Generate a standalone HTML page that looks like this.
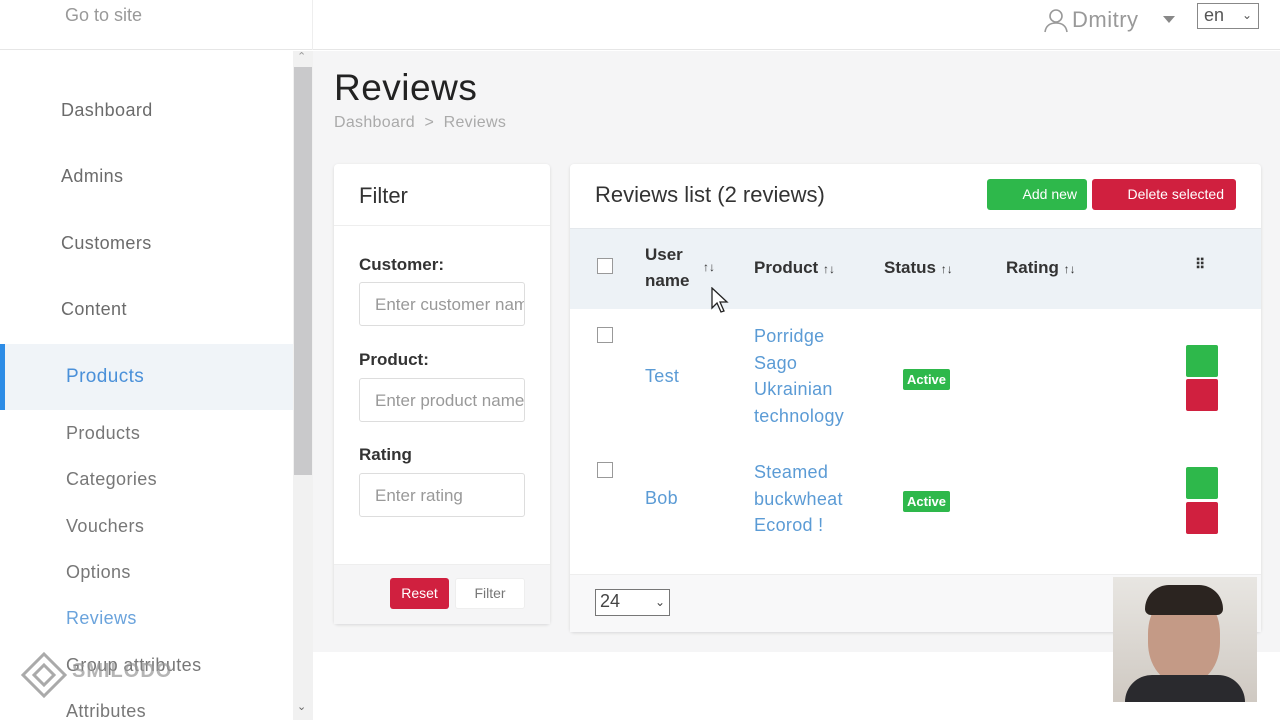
<!DOCTYPE html>
<html><head><style>
*{box-sizing:border-box;margin:0;padding:0}
body{width:1280px;height:720px;overflow:hidden;background:#fff;font-family:"Liberation Sans",sans-serif;position:relative;color:#333}
.a{position:absolute}
.side a,.sub{position:absolute;color:#6b6b6b;font-size:18px;letter-spacing:.4px}
.sub{color:#777}
.blue{color:#4a90d9}
.card{position:absolute;background:#fff;border-radius:4px;box-shadow:0 1px 3px rgba(0,0,0,.12)}
.inp{position:absolute;left:25px;width:166px;height:44px;border:1px solid #ddd;border-radius:3px;color:#999;font-size:17px;padding:12px 15px;white-space:nowrap;overflow:hidden}
.lbl{position:absolute;left:25px;font-weight:bold;font-size:17px;color:#333}
.th{position:absolute;font-weight:bold;font-size:17px;color:#333}
.cb{position:absolute;width:16px;height:16px;border:1px solid #999;background:#fff}
.lnk{position:absolute;color:#5b9bd5;font-size:18px;line-height:26.5px;letter-spacing:.3px}
.badge{position:absolute;background:#2eb84b;color:#fff;font-weight:bold;font-size:13px;padding:3px 4px;border-radius:2px}
.g{position:absolute;width:32px;height:32px;background:#2eb84b;border-radius:2px}
.r{position:absolute;width:32px;height:32px;background:#d0203f;border-radius:2px}
</style></head><body>
<div class="a" style="left:0;top:0;width:1280px;height:50px;border-bottom:1px solid #e6e6e6;background:#fff"></div>
<div class="a" style="left:312px;top:0;width:1px;height:50px;background:#eee"></div>
<div class="a" style="left:65px;top:5px;font-size:18px;color:#999">Go to site</div>
<svg class="a" style="left:1043px;top:7px" width="26" height="26" viewBox="0 0 26 26" fill="none" stroke="#999" stroke-width="1.6"><circle cx="13" cy="9" r="6"/><path d="M2 25c1-7 6-9 11-9s10 2 11 9"/></svg>
<div class="a" style="left:1072px;top:7px;font-size:22px;color:#999;letter-spacing:.5px">Dmitry</div>
<div class="a" style="left:1163px;top:16px;border:6px solid transparent;border-top:7px solid #888"></div>
<div class="a" style="left:1197px;top:3px;width:62px;height:26px;border:1px solid #888;font-size:18px;padding:1px 6px;color:#555">en <span style="float:right;font-size:12px;margin-top:3px">&#8964;</span></div>

<div class="a" style="left:313px;top:51px;width:967px;height:601px;background:#f5f5f6"></div>
<div class="a" style="left:293px;top:51px;width:20px;height:669px;background:#f1f1f1"></div>
<div class="a" style="left:294px;top:67px;width:18px;height:408px;background:#c9c9cb"></div>
<div class="a" style="left:297px;top:50px;font-size:11px;color:#999">&#8963;</div>
<div class="a" style="left:297px;top:700px;font-size:11px;color:#666">&#8964;</div>

<div class="side">
<a style="left:61px;top:100px">Dashboard</a>
<a style="left:61px;top:166px">Admins</a>
<a style="left:61px;top:233px">Customers</a>
<a style="left:61px;top:299px">Content</a>
</div>
<div class="a" style="left:0;top:344px;width:293px;height:66px;background:#f0f4f8"></div>
<div class="a" style="left:0;top:344px;width:5px;height:66px;background:#2d8ce6"></div>
<div class="a blue" style="left:66px;top:366px;font-size:19px;letter-spacing:.4px">Products</div>
<div class="sub" style="left:66px;top:423px">Products</div>
<div class="sub" style="left:66px;top:469px">Categories</div>
<div class="sub" style="left:66px;top:516px">Vouchers</div>
<div class="sub" style="left:66px;top:562px">Options</div>
<div class="sub blue" style="left:66px;top:608px;color:#6aa3dc">Reviews</div>
<div class="sub" style="left:66px;top:655px">Group attributes</div>
<div class="sub" style="left:66px;top:701px">Attributes</div>
<svg class="a" style="left:20px;top:651px" width="48" height="48" viewBox="0 0 48 48" fill="none" stroke="#aaa" stroke-width="3"><path d="M24 3L45 24 24 45 3 24Z"/><path d="M24 14L34 24 24 34 14 24Z"/></svg>
<div class="a" style="left:72px;top:660px;font-size:20px;font-weight:bold;color:rgba(150,150,150,.7);letter-spacing:1px">SMILODO</div>

<div class="a" style="left:334px;top:67px;font-size:37px;color:#222;letter-spacing:.5px">Reviews</div>
<div class="a" style="left:334px;top:114px;font-size:16px;color:#aaa;letter-spacing:.3px">Dashboard &nbsp;&gt;&nbsp; Reviews</div>

<div class="card" style="left:334px;top:164px;width:216px;height:460px">
<div class="a" style="left:0;top:0;width:216px;height:62px;border-bottom:1px solid #eee"></div>
<div class="a" style="left:25px;top:19px;font-size:22px;color:#333">Filter</div>
<div class="lbl" style="top:91px">Customer:</div>
<div class="inp" style="top:118px">Enter customer name</div>
<div class="lbl" style="top:186px">Product:</div>
<div class="inp" style="top:214px">Enter product name</div>
<div class="lbl" style="top:281px">Rating</div>
<div class="inp" style="top:309px">Enter rating</div>
<div class="a" style="left:0;top:400px;width:216px;height:60px;background:#f5f5f6;border-top:1px solid #eee"></div>
<div class="a" style="left:56px;top:414px;width:59px;height:31px;background:#d0203f;color:#fff;border-radius:3px;font-size:14px;text-align:center;line-height:31px">Reset</div>
<div class="a" style="left:121px;top:414px;width:70px;height:31px;background:#fff;color:#777;border:1px solid #eee;border-radius:3px;font-size:14px;text-align:center;line-height:29px">Filter</div>
</div>

<div class="card" style="left:570px;top:164px;width:691px;height:468px">
<div class="a" style="left:25px;top:18px;font-size:22px;color:#333">Reviews list (2 reviews)</div>
<div class="a" style="left:417px;top:15px;width:100px;height:31px;background:#2eb84b;color:#fff;border-radius:3px;font-size:14px;text-align:right;padding-right:10px;line-height:31px">Add new</div>
<div class="a" style="left:522px;top:15px;width:144px;height:31px;background:#d0203f;color:#fff;border-radius:3px;font-size:14px;text-align:right;padding-right:12px;line-height:31px">Delete selected</div>
<div class="a" style="left:0;top:64px;width:691px;height:81px;background:#edf2f6;border-top:1px solid #e4e8ec"></div>
<div class="cb" style="left:27px;top:94px"></div>
<div class="th" style="left:75px;top:78px;line-height:26px">User<br>name</div>
<div class="th" style="left:133px;top:96px;font-size:12px">↑↓</div>
<div class="th" style="left:184px;top:94px">Product <span style="font-size:12px">↑↓</span></div>
<div class="th" style="left:314px;top:94px">Status <span style="font-size:12px">↑↓</span></div>
<div class="th" style="left:436px;top:94px">Rating <span style="font-size:12px">↑↓</span></div>
<div class="th" style="left:625px;top:92px;font-size:14px;letter-spacing:-1px">⠿</div>
<div class="cb" style="left:27px;top:163px"></div>
<div class="lnk" style="left:75px;top:199px">Test</div>
<div class="lnk" style="left:184px;top:159px">Porridge<br>Sago<br>Ukrainian<br>technology</div>
<div class="badge" style="left:333px;top:205px">Active</div>
<div class="g" style="left:616px;top:181px"></div>
<div class="r" style="left:616px;top:215px"></div>
<div class="cb" style="left:27px;top:298px"></div>
<div class="lnk" style="left:75px;top:321px">Bob</div>
<div class="lnk" style="left:184px;top:295px">Steamed<br>buckwheat<br>Ecorod !</div>
<div class="badge" style="left:333px;top:327px">Active</div>
<div class="g" style="left:616px;top:303px"></div>
<div class="r" style="left:616px;top:338px"></div>
<div class="a" style="left:0;top:410px;width:691px;height:58px;background:#f8f8f9;border-top:1px solid #eee"></div>
<div class="a" style="left:25px;top:425px;width:75px;height:27px;border:1px solid #777;background:#fff;font-size:18px;padding:1px 4px;color:#444">24 <span style="float:right;font-size:12px;margin-top:4px">&#8964;</span></div>
</div>
<svg class="a" style="left:711px;top:287px" width="18" height="26" viewBox="0 0 18 26"><path d="M1 1v20l5-5 4 9 3-1-4-9h7z" fill="#fff" stroke="#222" stroke-width="1.3"/></svg>

<div class="a" style="left:1113px;top:577px;width:144px;height:125px;background:linear-gradient(#e8e6e2,#cfc9c2)"></div>
<div class="a" style="left:1148px;top:592px;width:72px;height:92px;border-radius:45%;background:#c49a86"></div>
<div class="a" style="left:1145px;top:585px;width:78px;height:30px;border-radius:40px 40px 10px 10px;background:#2b2420"></div>
<div class="a" style="left:1125px;top:675px;width:120px;height:27px;border-radius:30px 30px 0 0;background:#2a2a2e"></div>
</body></html>
